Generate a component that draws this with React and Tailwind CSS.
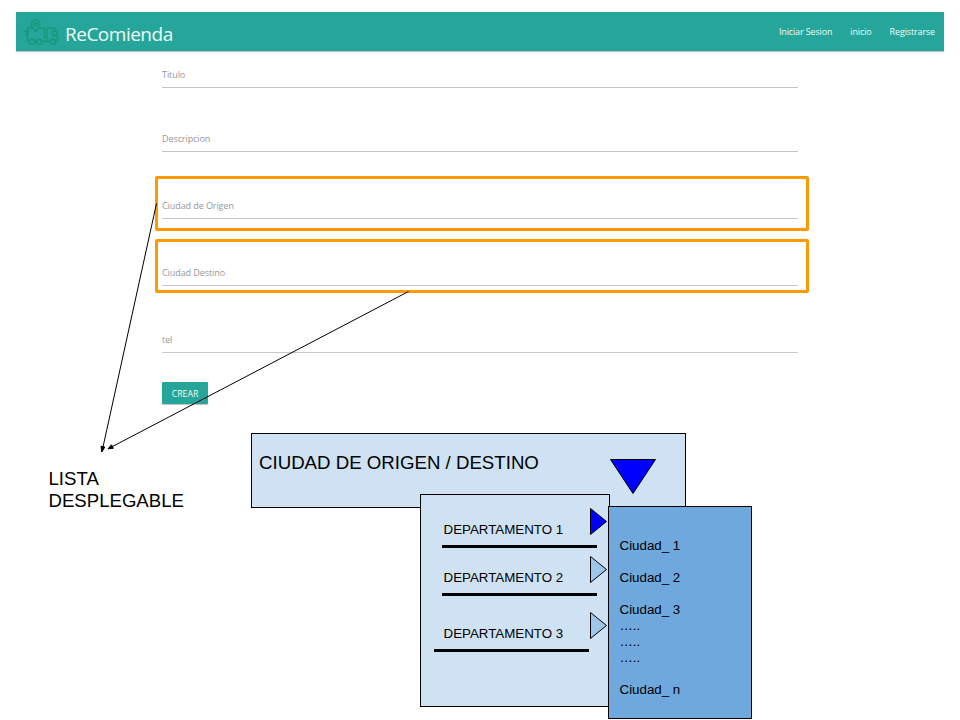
import React from "react";

const fields = [
  { label: "Titulo", box: "h-[37px] border-[#c4c4c4]" },
  { label: "Descripcion", box: "h-16 border-[#c4c4c4]" },
  { label: "Ciudad de Origen", box: "h-[67px] border-[#c8c8c8]" },
  { label: "Ciudad Destino", box: "h-[67px] border-[#c8c8c8]" },
  { label: "tel", box: "h-[67px] border-[#c8c8c8]" },
];

const departments = [
  { name: "DEPARTAMENTO 1", row: "mt-[23px]", rule: "ml-[21px]", fill: "#0000ff" },
  { name: "DEPARTAMENTO 2", row: "mt-[22px]", rule: "ml-[21px]", fill: "#9fc5e8" },
  { name: "DEPARTAMENTO 3", row: "mt-[30px]", rule: "ml-[13px]", fill: "#9fc5e8" },
];

const cities = ["Ciudad_ 1", "", "Ciudad_ 2", "", "Ciudad_ 3", "…..", "…..", "…..", "", "Ciudad_ n"];

function TruckLogo() {
  return (
    <svg className="mt-[3px]" width="36" height="28" viewBox="0 0 36 28" fill="none" stroke="#12906f" strokeWidth="1.4" strokeLinecap="round" strokeLinejoin="round" opacity="0.7">
      <path d="M8.500 9H4.500V19Q4.500 22.500 6 22.500M12 22.500H13.500M19 22.500H27M32.500 22.500H34.500V16L32.500 10.500Q32 9 30 9H24V22.500M17 9H21.500V19.500" />
      <path d="M34 16.500H29.500V12H32.500" />
      <path d="M0.500 12.500H6M2.500 15.500H4.500" />
      <path d="M12.500 12.500C9 8.500 8.300 7 8.300 5.200A4.200 4.200 0 0 1 16.700 5.200C16.700 7 16 8.500 12.500 12.500Z" />
      <circle cx="12.500" cy="5.300" r="1.600" />
      <circle cx="9" cy="22.800" r="2.600" />
      <circle cx="16.200" cy="22.800" r="2.600" />
      <circle cx="29.800" cy="22.800" r="2.600" />
    </svg>
  );
}

function Header() {
  return (
    <header className="flex h-[39px] items-center bg-[#26a69a] pl-[7px] pr-[9px] text-[#eefaf8] shadow-[0_1px_1px_rgba(0,0,0,0.25)]">
      <div className="flex items-center gap-[6px]">
        <TruckLogo />
        <span className="mt-[5px] text-[19px] leading-6 tracking-[-0.5px] whitespace-nowrap">ReComienda</span>
      </div>
      <nav className="ml-auto flex gap-[18px] text-[9px] leading-3 tracking-[-0.14px] whitespace-nowrap">
        <a>Iniciar Sesion</a>
        <a>inicio</a>
        <a>Registrarse</a>
      </nav>
    </header>
  );
}

function DepartmentPanel() {
  return (
    <section className="absolute left-[420px] top-[494px] h-[213px] w-[190px] border border-black bg-[#cfe2f3] pt-[4px]">
      {departments.map((d) => (
        <div key={d.name} className={`relative ${d.row}`}>
          <p className="pl-[22.500px] text-[13.330px] leading-4 whitespace-nowrap">{d.name}</p>
          <div className={`mt-[7px] h-[3px] w-[155px] bg-black ${d.rule}`} />
          <svg className="absolute left-[169px] top-[-15px]" width="19" height="30" viewBox="0 0 19 30">
            <path d="M0.500 1.500L16.500 14.500L0.500 27.500Z" fill={d.fill} stroke="#000" />
          </svg>
        </div>
      ))}
    </section>
  );
}

export default function App() {
  return (
    <div className="relative h-[720px] w-[960px] overflow-hidden bg-white px-4 pt-3 font-['Open_Sans','Noto_Sans',sans-serif]">
      <Header />
      <form className="ml-[146px] w-[636px]">
        {fields.map((f) => (
          <div key={f.label} className={`flex items-end border-b pb-[6px] ${f.box}`}>
            <label className="text-[9px] leading-3 tracking-[-0.08px] text-[#979797]">{f.label}</label>
          </div>
        ))}
        <button type="button" className="mt-[29px] flex h-[22px] w-[46px] items-center justify-center rounded-[1px] bg-[#26a69a] pt-px text-[8.700px] leading-3 text-[#eefaf8] shadow-[0_1px_1px_rgba(0,0,0,0.25)]">
          CREAR
        </button>
      </form>

      <div className="absolute left-[155px] top-[176px] h-[55px] w-[654px] rounded-[2px] border-3 border-[#ff9900]" />
      <div className="absolute left-[155px] top-[239px] h-[54px] w-[654px] rounded-[2px] border-3 border-[#ff9900]" />

      <div className="font-['Liberation_Sans',Arial,sans-serif] text-black">
        <p className="absolute left-[48.500px] top-[468px] w-[160px] text-[18.600px] leading-[22px]">LISTA DESPLEGABLE</p>
        <section className="absolute left-[251px] top-[433px] flex h-[75px] w-[435px] justify-between border border-black bg-[#cfe2f3] pl-[7px] pr-[28px]">
          <h2 className="mt-[18px] text-[18.670px] leading-[22px] whitespace-nowrap">CIUDAD DE ORIGEN / DESTINO</h2>
          <svg className="mt-[25px]" width="48" height="36" viewBox="0 0 48 36">
            <path d="M1.500 0.500H46.500L24 34.500Z" fill="#0000ff" stroke="#000" />
          </svg>
        </section>
        <DepartmentPanel />
        <section className="absolute left-[608px] top-[506px] h-[213px] w-[144px] border border-black bg-[#6fa8dc] pl-[10.500px] pt-[31px] text-[13.330px]">
          {cities.map((c, i) => (
            <p key={i} className="h-4 leading-4">{c}</p>
          ))}
        </section>
      </div>

      <svg className="absolute left-0 top-0" width="960" height="720" viewBox="0 0 960 720" stroke="#000" strokeWidth="1">
        <path d="M156.500 203.500L103 447M408.500 291.500L112.500 446.500" fill="none" />
        <path d="M101.800 452L101 446.200L104.800 447.100ZM108 448.800L111.500 444.800L113.300 448.300Z" />
      </svg>
    </div>
  );
}
